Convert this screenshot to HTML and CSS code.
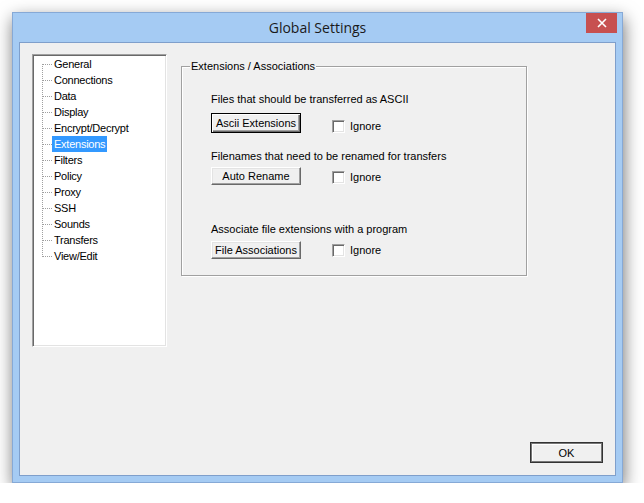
FILE: index.html
```html
<!DOCTYPE html>
<html lang="en">
<head>
    <meta charset="UTF-8">
    <title>Global Settings</title>
    <link rel="stylesheet" href="styles.css">
</head>
<body>
    <div class="window">
        <div class="titlebar">
            <span class="title">Global Settings</span>
            <button class="close">
                <svg width="10" height="10" viewBox="0 0 10 10"><path d="M1 1L9 9M9 1L1 9" stroke="#fff" stroke-width="1.6"/></svg>
            </button>
        </div>
        <div class="client">
            <div class="main">
                <ul class="tree">
                    <li><span class="branch"></span><span class="label">General</span></li>
                    <li><span class="branch"></span><span class="label">Connections</span></li>
                    <li><span class="branch"></span><span class="label">Data</span></li>
                    <li><span class="branch"></span><span class="label">Display</span></li>
                    <li><span class="branch"></span><span class="label">Encrypt/Decrypt</span></li>
                    <li><span class="branch"></span><span class="label selected">Extensions</span></li>
                    <li><span class="branch"></span><span class="label">Filters</span></li>
                    <li><span class="branch"></span><span class="label">Policy</span></li>
                    <li><span class="branch"></span><span class="label">Proxy</span></li>
                    <li><span class="branch"></span><span class="label">SSH</span></li>
                    <li><span class="branch"></span><span class="label">Sounds</span></li>
                    <li><span class="branch"></span><span class="label">Transfers</span></li>
                    <li><span class="branch"></span><span class="label">View/Edit</span></li>
                </ul>
                <div class="group">
                    <span class="group-title">Extensions / Associations</span>
                    <div class="group-body">
                        <p class="caption c1">Files that should be transferred as ASCII</p>
                        <div class="row r1">
                            <button class="btn default">Ascii Extensions</button>
                            <label class="check"><span class="box"></span>Ignore</label>
                        </div>
                        <p class="caption c2">Filenames that need to be renamed for transfers</p>
                        <div class="row r2">
                            <button class="btn">Auto Rename</button>
                            <label class="check"><span class="box"></span>Ignore</label>
                        </div>
                        <p class="caption c3">Associate file extensions with a program</p>
                        <div class="row r3">
                            <button class="btn">File Associations</button>
                            <label class="check"><span class="box"></span>Ignore</label>
                        </div>
                    </div>
                </div>
            </div>
            <div class="footer">
                <button class="btn ok">OK</button>
            </div>
        </div>
    </div>
</body>
</html>
```

FILE: styles.css
```css
body {
    margin: 0;
    background: #fff;
    font-family: "Liberation Sans", Arial, sans-serif;
    font-size: 11px;
    color: #000;
}
.window {
    box-sizing: border-box;
    width: 611px;
    height: 471px;
    margin: 12px 0 0 12px;
    padding: 0 6px 6px;
    border: 1px solid #86a9d6;
    background: #a5cbf3;
    display: flex;
    flex-direction: column;
    box-shadow: 1px 6px 16px rgba(0, 0, 0, 0.55);
}
.titlebar {
    display: grid;
    grid-template-columns: 1fr auto 1fr;
    align-items: center;
    height: 29px;
    margin: 0 -6px;
}
.title {
    grid-column: 2;
    font-family: "Open Sans", sans-serif;
    font-size: 14px;
    color: #1a1a1a;
}
.close {
    grid-column: 3;
    justify-self: end;
    align-self: start;
    width: 31px;
    height: 20px;
    margin-right: 5px;
    padding: 0;
    border: none;
    background: #c75050;
    display: flex;
    align-items: center;
    justify-content: center;
}
.client {
    box-sizing: border-box;
    height: 434px;
    padding: 11px 12px 12px;
    border: 1px solid #7f9fcb;
    background: #f0f0f0;
    display: flex;
    flex-direction: column;
}
.main {
    display: flex;
    align-items: flex-start;
}

/* tree */
.tree {
    box-sizing: border-box;
    width: 135px;
    height: 293px;
    margin: 0;
    padding: 1px 0 0 9px;
    list-style: none;
    background: #fff;
    border: 1px solid;
    border-color: #a0a0a0 #fff #fff #a0a0a0;
    box-shadow: inset 1px 1px #696969, inset -1px -1px #e3e3e3;
    letter-spacing: -0.25px;
}
.tree li {
    display: flex;
    height: 16px;
    line-height: 16px;
}
.branch {
    flex: none;
    width: 10px;
    height: 16px;
    background-image:
        repeating-linear-gradient(to right, #a0a0a0 0 1px, transparent 1px 2px),
        repeating-linear-gradient(to bottom, #a0a0a0 0 1px, transparent 1px 2px);
    background-size: 9px 1px, 1px 16px;
    background-position: 1px 8px, 0 0;
    background-repeat: no-repeat;
}
.tree li:first-child .branch {
    background-size: 9px 1px, 1px 8px;
    background-position: 1px 8px, 0 8px;
}
.tree li:last-child .branch {
    background-size: 9px 1px, 1px 9px;
    background-position: 1px 8px, 0 0;
}
.label { padding: 0 2px; }
.label.selected { background: #3399ff; color: #fff; }

/* group box */
.group {
    box-sizing: border-box;
    width: 346px;
    height: 210px;
    margin: 12px 0 0 14px;
    padding: 0 0 0 8px;
    border: 1px solid #a0a0a0;
    box-shadow: inset 1px 1px #fff, 1px 1px #fff;
}
.group-title {
    display: table;
    margin-top: -7px;
    padding: 0 1px;
    line-height: 13px;
    background: #f0f0f0;
}
.group-body { margin-left: 21px; }
.caption {
    margin: 0;
    line-height: 13px;
}
.c1 { margin-top: 20px; }
.c2 { margin-top: 17px; }
.c3 { margin-top: 38px; }
.row {
    display: flex;
    align-items: center;
}
.r1 { margin-top: 7px; }
.r2 { margin-top: 4px; }
.r3 { margin-top: 5px; }
.r1 .check { margin-top: 6px; }
.r2 .check { margin-top: 2px; }

.btn {
    box-sizing: border-box;
    width: 90px;
    height: 18px;
    padding: 0;
    font: inherit;
    color: #000;
    background: #f0f0f0;
    border: 1px solid;
    border-color: #fff #696969 #696969 #fff;
    box-shadow: inset -1px -1px #a0a0a0, inset 1px 1px #e3e3e3;
}
.btn.default {
    height: 20px;
    border-color: #000;
    box-shadow: inset 1px 1px #fff, inset -1px -1px #696969, inset -2px -2px #a0a0a0;
}
.check {
    display: flex;
    align-items: center;
    gap: 5px;
    margin-left: 31px;
}
.box {
    box-sizing: border-box;
    width: 13px;
    height: 13px;
    background: #fff;
    border: 1px solid;
    border-color: #a0a0a0 #fff #fff #a0a0a0;
    box-shadow: inset 1px 1px #696969, inset -1px -1px #e3e3e3;
}

.footer {
    margin-top: auto;
    display: flex;
    justify-content: flex-end;
}
.btn.ok {
    width: 73px;
    height: 21px;
    border: 1px solid #333;
    box-shadow: inset 0 0 0 1px #777, inset 2px 2px #fff;
}
```
